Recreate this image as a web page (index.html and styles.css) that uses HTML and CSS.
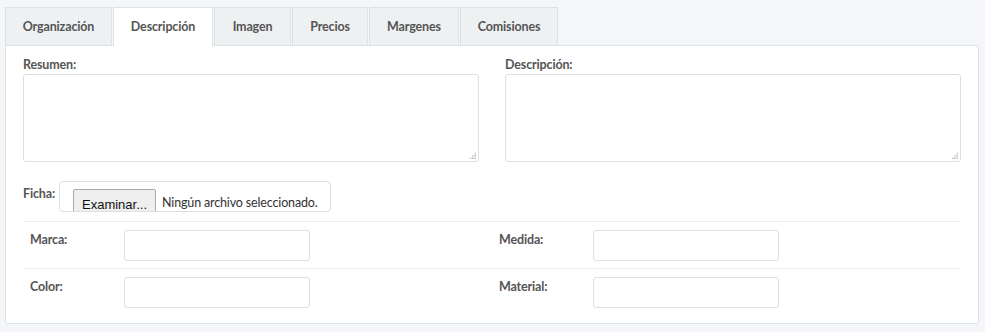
FILE: index.html
```html
<!DOCTYPE html>
<html lang="es">
<head>
<meta charset="utf-8">
<link rel="stylesheet" href="styles.css">
</head>
<body>
<div class="wrap">
  <ul class="tabs">
    <li class="tab">Organización</li>
    <li class="tab active">Descripción</li>
    <li class="tab">Imagen</li>
    <li class="tab">Precios</li>
    <li class="tab">Margenes</li>
    <li class="tab">Comisiones</li>
  </ul>
  <div class="panel">
    <div class="two-col">
      <div class="field">
        <label class="lbl">Resumen:</label>
        <div class="textarea"><span class="grip"></span></div>
      </div>
      <div class="field">
        <label class="lbl">Descripción:</label>
        <div class="textarea"><span class="grip"></span></div>
      </div>
    </div>
    <div class="ficha">
      <label class="lbl">Ficha:</label>
      <div class="filebox">
        <span class="filebtn">Examinar...</span>
        <span class="filetext">Ningún archivo seleccionado.</span>
      </div>
    </div>
    <div class="grid-row first">
      <div class="cell"><label class="lbl cl">Marca:</label><div class="input"></div></div>
      <div class="cell"><label class="lbl cl">Medida:</label><div class="input"></div></div>
    </div>
    <div class="grid-row">
      <div class="cell"><label class="lbl cl">Color:</label><div class="input"></div></div>
      <div class="cell"><label class="lbl cl">Material:</label><div class="input"></div></div>
    </div>
  </div>
</div>
</body>
</html>
```

FILE: styles.css
```css
* { box-sizing: border-box; }
html, body { margin: 0; padding: 0; }
body {
  background: #f4f6f9;
  font-family: "Lato", "Open Sans", sans-serif;
  font-size: 12.5px;
  letter-spacing: -0.15px;
  color: #555;
  width: 985px;
  height: 332px;
  overflow: hidden;
}
.wrap { padding: 7px 6px 0 5px; }
.tabs {
  list-style: none;
  margin: 0;
  padding: 0;
  display: flex;
  height: 38px;
}
.tab {
  height: 38px;
  line-height: 37px;
  padding: 0;
  text-align: center;
  background: #eef1f2;
  border: 1px solid #dde3e5;
  border-bottom: none;
  margin-right: 1px;
  font-weight: bold;
  color: #555;
}
.tab:nth-child(1) { width: 107px; }
.tab:nth-child(2) { width: 100px; }
.tab:nth-child(3) { width: 77px; }
.tab:nth-child(4) { width: 76px; }
.tab:nth-child(5) { width: 90px; }
.tab:nth-child(6) { width: 98px; }
.tab.active {
  background: #fff;
  position: relative;
  height: 39px;
  z-index: 1;
}
.panel {
  background: #fff;
  border: 1px solid #dde3e5;
  border-radius: 0 3px 3px 3px;
  height: 279px;
  padding: 10px 17px 0 17px;
}
.lbl {
  display: block;
  font-weight: bold;
  color: #555;
  line-height: 18px;
}
.two-col {
  display: grid;
  grid-template-columns: 456px 456px;
  column-gap: 26px;
}
.textarea {
  height: 88px;
  border: 1px solid #d9e2e2;
  border-radius: 3px;
  position: relative;
}
.grip {
  position: absolute;
  right: 2px;
  bottom: 2px;
  width: 7px;
  height: 7px;
  background:
    radial-gradient(circle, #bbb 0.8px, transparent 1px) 0 0 / 2.5px 2.5px;
  clip-path: polygon(100% 0, 100% 100%, 0 100%);
}
.ficha {
  display: flex;
  align-items: flex-start;
  margin-top: 19px;
  height: 31px;
}
.ficha .lbl { width: 36px; padding-top: 4px; }
.filebox {
  width: 272px;
  height: 31px;
  border: 1px solid #d9e2e2;
  border-radius: 4px;
  overflow: hidden;
  display: flex;
  align-items: flex-start;
  padding: 7px 0 0 13px;
}
.filebtn {
  display: block;
  width: 83px;
  height: 30px;
  background: #efefef;
  border: 1px solid #aaa;
  border-radius: 2px;
  font-family: "Liberation Sans", "DejaVu Sans", sans-serif;
  font-size: 13px;
  letter-spacing: 0;
  color: #111;
  text-align: center;
  line-height: 27px;
  padding-top: 1px;
}
.filetext {
  margin-left: 6px;
  line-height: 28px;
  color: #333;
}
.grid-row {
  display: grid;
  grid-template-columns: 469px 469px;
  border-top: 1px solid #e7ebec;
  height: 47px;
  padding-top: 8px;
}
.grid-row.first { margin-top: 9px; }
.cell { display: flex; align-items: flex-start; }
.cl { width: 101px; padding-left: 7px; padding-top: 1px; }
.input {
  width: 186px;
  height: 31px;
  border: 1px solid #d9e2e2;
  border-radius: 3px;
}
```
